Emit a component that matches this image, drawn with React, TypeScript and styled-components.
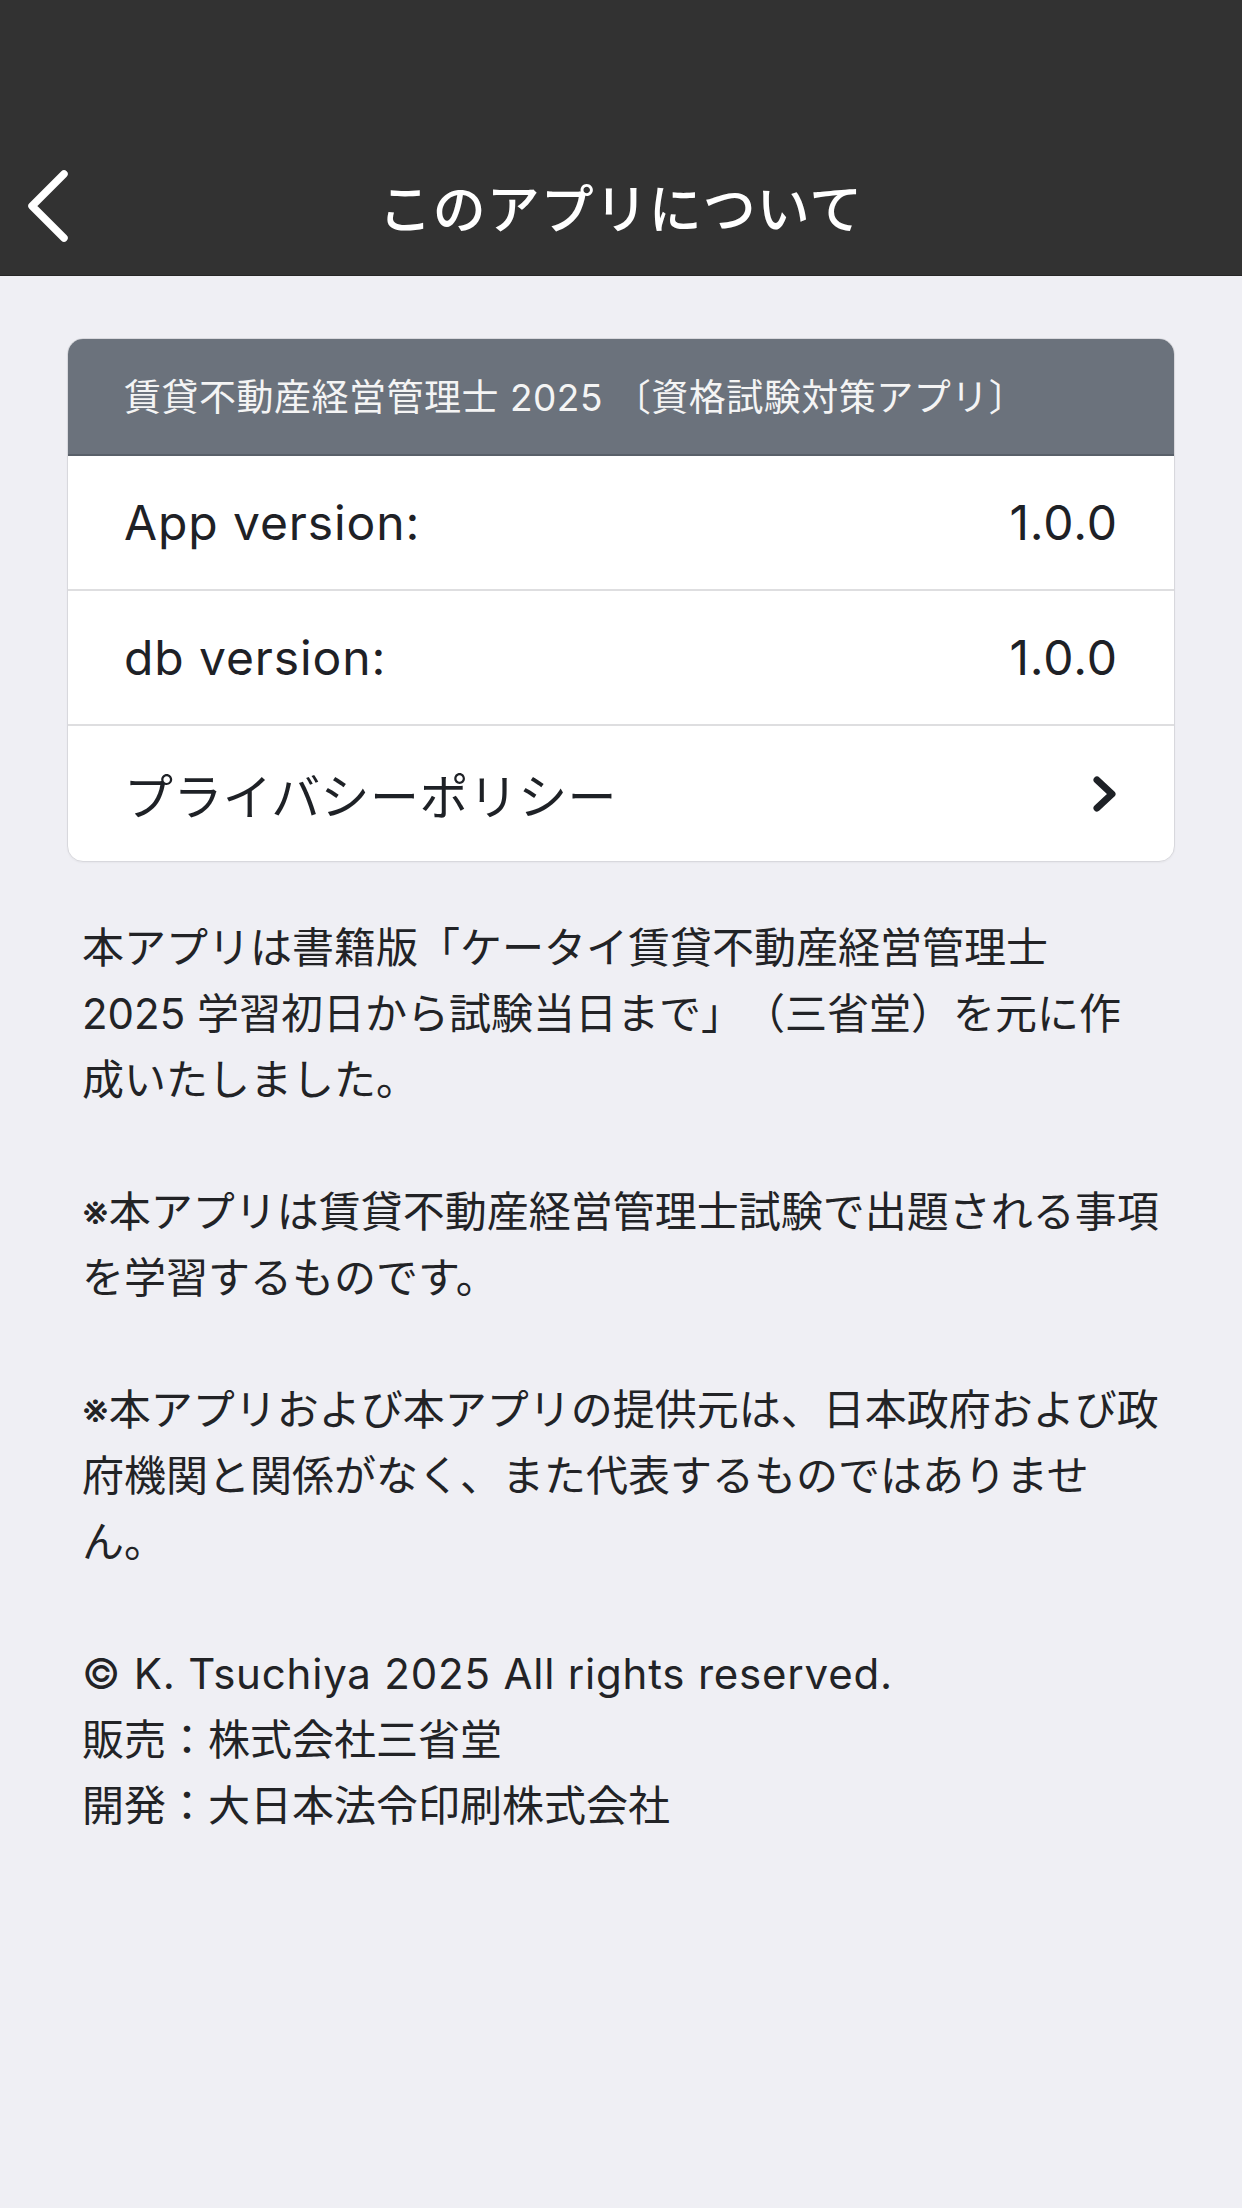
import React, { FC } from "react";
import styled, { createGlobalStyle } from "styled-components";

const JP = `"Noto Sans CJK JP", "Noto Sans", sans-serif`;
const LATIN = `Inter, "Noto Sans CJK JP", sans-serif`;

const GlobalStyle = createGlobalStyle`
  html, body {
    margin: 0;
    padding: 0;
    background: #efeff4;
  }
  body {
    font-family: ${JP};
    color: #222326;
  }
`;

const Page = styled.div`
  min-height: 2208px;
  background: #efeff4;
`;

const Header = styled.header`
  height: 276px;
  background: #323232;
  border-bottom: 1px solid #262626;
  box-sizing: border-box;
  display: flex;
  flex-direction: column;
  justify-content: flex-end;
`;

const NavBar = styled.div`
  height: 138px;
  display: grid;
  grid-template-columns: 140px 1fr 140px;
  align-items: center;
`;

const BackButton = styled.button`
  background: none;
  border: 0;
  padding: 0 0 0 24px;
  height: 100%;
  display: flex;
  align-items: center;
  cursor: pointer;
`;

const Title = styled.h1`
  margin: 0;
  text-align: center;
  color: #ffffff;
  font-family: ${JP};
  font-size: 53px;
  font-weight: 500;
  letter-spacing: 1px;
`;

const Card = styled.section`
  margin: 62px 67px 0;
  background: #ffffff;
  border: 1px solid #d8d8dd;
  border-radius: 16px;
  overflow: hidden;
  box-shadow: 0 1px 2px rgba(0, 0, 0, 0.04);
`;

const CardHeader = styled.div`
  height: 117px;
  box-sizing: border-box;
  background: #6b727c;
  border-bottom: 2px solid #596069;
  color: #f4f4f4;
  font-family: ${LATIN};
  font-size: 37px;
  letter-spacing: 0.5px;
  display: flex;
  align-items: center;
  padding: 0 56px 4px;
`;

const Row = styled.div<{ $last?: boolean }>`
  height: 135px;
  box-sizing: border-box;
  display: flex;
  align-items: center;
  justify-content: space-between;
  padding: 0 56px;
  border-bottom: ${(p) => (p.$last ? "none" : "2px solid #dedee0")};
  font-family: ${(p) => (p.$last ? JP : LATIN)};
  font-size: ${(p) => (p.$last ? "49px" : "48px")};
  letter-spacing: ${(p) => (p.$last ? "0.4px" : "0.9px")};
  color: #1e2126;
`;

const Value = styled.span`
  font-family: ${LATIN};
`;

const Description = styled.div`
  padding: 53px 78px 0 82px;
  font-family: ${LATIN};
  font-size: 42px;
  line-height: 66px;
  color: #222326;
  text-spacing-trim: space-all;
`;

const Paragraph = styled.p`
  margin: 0 0 66px;
`;

const Line = styled.span<{ $latin?: boolean }>`
  display: block;
  white-space: nowrap;
  letter-spacing: ${(p) => (p.$latin ? "0.8px" : "0")};
`;

const BackIcon: FC = () => (
  <svg width="48" height="76" viewBox="0 0 48 76">
    <path
      d="M40 6 L8 38 L40 70"
      fill="none"
      stroke="#ffffff"
      strokeWidth="7.5"
      strokeLinecap="round"
      strokeLinejoin="round"
    />
  </svg>
);

const ChevronRight: FC = () => (
  <svg width="26" height="36" viewBox="0 0 26 36">
    <path
      d="M5 4 L20 18 L5 32"
      fill="none"
      stroke="#1e2126"
      strokeWidth="7"
      strokeLinecap="round"
      strokeLinejoin="round"
    />
  </svg>
);

const paragraphs = [
  [
    "本アプリは書籍版「ケータイ賃貸不動産経営管理士",
    "2025 学習初日から試験当日まで」（三省堂）を元に作",
    "成いたしました。",
  ],
  [
    "※本アプリは賃貸不動産経営管理士試験で出題される事項",
    "を学習するものです。",
  ],
  [
    "※本アプリおよび本アプリの提供元は、日本政府および政",
    "府機関と関係がなく、また代表するものではありませ",
    "ん。",
  ],
  [
    "© K. Tsuchiya 2025 All rights reserved.",
    "販売：株式会社三省堂",
    "開発：大日本法令印刷株式会社",
  ],
];

export default function App() {
  return (
    <>
      <GlobalStyle />
      <Page>
        <Header>
          <NavBar>
            <BackButton aria-label="戻る">
              <BackIcon />
            </BackButton>
            <Title>このアプリについて</Title>
            <span />
          </NavBar>
        </Header>

        <Card>
          <CardHeader>賃貸不動産経営管理士 2025 〔資格試験対策アプリ〕</CardHeader>
          <Row>
            <span>App version:</span>
            <Value>1.0.0</Value>
          </Row>
          <Row>
            <span>db version:</span>
            <Value>1.0.0</Value>
          </Row>
          <Row $last>
            <span>プライバシーポリシー</span>
            <ChevronRight />
          </Row>
        </Card>

        <Description>
          {paragraphs.map((lines, i) => (
            <Paragraph key={i}>
              {lines.map((l) => (
                <Line key={l} $latin={l.startsWith("©")}>
                  {l}
                </Line>
              ))}
            </Paragraph>
          ))}
        </Description>
      </Page>
    </>
  );
}
